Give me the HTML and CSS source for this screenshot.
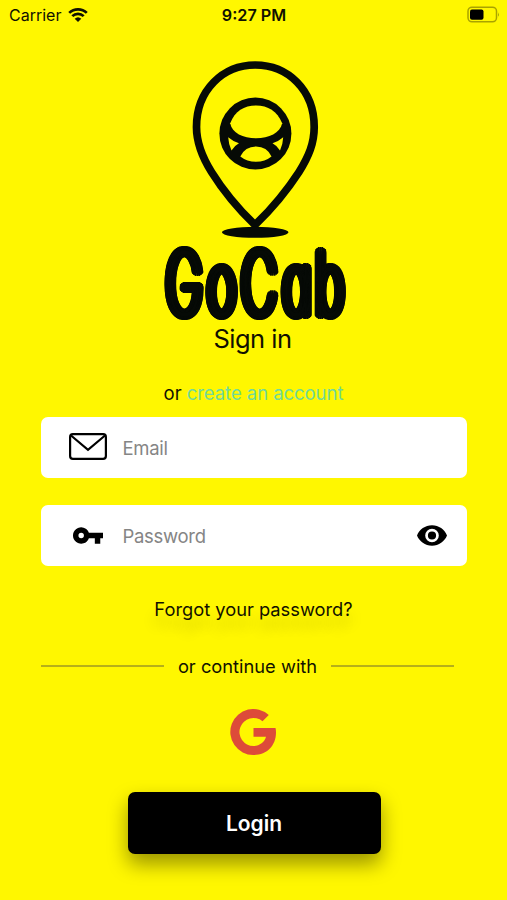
FILE: index.html
```html
<!DOCTYPE html>
<html lang="en">
<head>
    <meta charset="UTF-8">
    <meta name="viewport" content="width=device-width, initial-scale=1.0">
    <title>GoCab - Sign in</title>
    <link rel="stylesheet" href="styles.css">
</head>
<body>
    <header class="status-bar">
        <div class="carrier">
            <span>Carrier</span>
            <svg class="wifi" viewBox="0 0 20 14">
                <path d="M1.2 4.9a12.7 12.7 0 0 1 17.6 0M4.3 8.1a8.2 8.2 0 0 1 11.4 0" fill="none" stroke="#111100" stroke-width="2.7"/>
                <path d="M10 14 6.7 10.7a4.8 4.8 0 0 1 6.6 0z" fill="#111100"/>
            </svg>
        </div>
        <time class="clock">9:27 PM</time>
        <svg class="battery" viewBox="0 0 33 18">
            <rect x="1" y="1.2" width="28.5" height="14.6" rx="4" fill="none" stroke="#a9a300" stroke-width="1.5"/>
            <rect x="3" y="3.4" width="13.5" height="10.4" rx="2" fill="#000"/>
            <path d="M31 6.2q1.8 2.3 0 4.6z" fill="#a9a300"/>
        </svg>
    </header>

    <main class="sign-in">
        <!-- Logo: map pin, steering wheel and brand name -->
        <svg class="logo" viewBox="0 0 190 268" role="img" aria-label="GoCab">
            <path class="pin" d="M96 170C83.500 158 65 137 52.500 117C42.500 101 37.500 88 37.500 72C37.500 35 64 10 96.200 10C129 10 155.200 35 155.200 72C155.200 88 150 101 140 117C127 137 108.500 158 96 170Z"/>
            <circle class="ink" cx="96.400" cy="78.600" r="36"/>
            <path class="hole" d="M71.200 68.300C76 56 85 50.500 97 50.500S118 56 123.200 68.300C121 78 110 83.300 97 83.300S73 78 71.200 68.300Z"/>
            <path class="hole" d="M69.200 82.300Q74 86.500 80 88.300Q75 91 72.500 95.500Q69.500 89 69.200 82.300ZM124.200 82.300Q119.500 86.500 113.500 88.300Q118.500 91 121 95.500Q124 89 124.200 82.300Z"/>
            <path class="hole" d="M81.300 101.500Q86 91.500 97 91.500T112.500 101.500Q106 106.800 97 106.800T81.300 101.500Z"/>
            <ellipse class="ink" cx="96.200" cy="177.300" rx="33.300" ry="5.500"/>
            <text class="brand" transform="translate(0 259.500) scale(.565 1)" x="12.700 85.800 145.700 219 276.600" y="0">GoCab</text>
        </svg>

        <h1>Sign in</h1>
        <p class="register">or <a href="#">create an account</a></p>

        <form>
            <label class="field">
                <svg class="mail-icon" viewBox="0 0 38 27">
                    <rect x="1.100" y="1.100" width="35.800" height="24.800" rx="2.800"/>
                    <path d="M2 2.500 19 16.800 36 2.500"/>
                </svg>
                <input type="email" placeholder="Email">
            </label>
            <label class="field">
                <svg class="key-icon" viewBox="1 6 22 12">
                    <path d="M12.650 10A6 6 0 1 0 12.650 14H17v4h4v-4h2v-4zM7 14a2 2 0 1 1 0-4 2 2 0 0 1 0 4z"/>
                </svg>
                <input type="password" placeholder="Password">
                <svg class="eye-icon" viewBox="1 4.500 22 15">
                    <path d="M12 4.500C7 4.500 2.730 7.610 1 12c1.730 4.390 6 7.500 11 7.500s9.270-3.110 11-7.500c-1.730-4.390-6-7.500-11-7.500zM12 17a5 5 0 1 1 0-10 5 5 0 0 1 0 10zm0-8a3 3 0 1 0 0 6 3 3 0 0 0 0-6z"/>
                </svg>
            </label>
            <a class="forgot" href="#">Forgot your password?</a>
            <div class="divider"><span>or continue with</span></div>
            <button class="google" type="button" aria-label="Continue with Google">
                <svg viewBox="0 0 46 46">
                    <path d="M23.500 19.100V27.800H36C34.500 33.300 29.500 37 23.500 37A14 14 0 1 1 32.500 12.300L38.800 6A23 23 0 1 0 23.500 46C37 46 46 36.500 46 23.500Q46 21 45.500 19.100Z"/>
                </svg>
            </button>
            <button class="login" type="submit">Login</button>
        </form>
    </main>
</body>
</html>
```
FILE: styles.css
```css
* {
    box-sizing: border-box;
}

body {
    margin: 0;
    height: 900px;
    overflow: hidden;
    background-color: #fff700;
    color: #111100;
    font-family: Inter, Roboto, sans-serif;
}

.status-bar {
    display: grid;
    grid-template-columns: 1fr auto 1fr;
    align-items: center;
    height: 30px;
    padding: 0 8px 0 9px;
    font-size: 16px;
}

.carrier {
    display: flex;
    align-items: center;
    gap: 7px;
}

.wifi {
    width: 20px;
    height: 14px;
}

.clock {
    font-weight: 600;
    font-size: 16.2px;
}

.battery {
    width: 33px;
    height: 18px;
    justify-self: end;
    margin-right: -1px;
}

.sign-in {
    padding: 25px 41px 0;
}

.logo {
    display: block;
    width: 190px;
    height: 268px;
    margin: 0 auto;
    overflow: visible;
}

.pin {
    fill: none;
    stroke: #060a06;
    stroke-width: 7.7px;
}

.ink {
    fill: #060a06;
}

.hole {
    fill: #fff700;
}

/* Thin letters thickened by a ring of shadows, so the ends come out round */
.brand {
    font-family: Inter, sans-serif;
    font-size: 86.5px;
    font-weight: 100;
    font-feature-settings: "cv11";
    fill: #060a06;
    stroke: #060a06;
    stroke-width: 2px;
    stroke-linejoin: round;
    text-shadow:
        6.8px 0 #060a06, -6.8px 0 #060a06,
        6.3px 1.15px #060a06, -6.3px 1.15px #060a06,
        6.3px -1.15px #060a06, -6.3px -1.15px #060a06,
        4.8px 2.1px #060a06, -4.8px 2.1px #060a06,
        4.8px -2.1px #060a06, -4.8px -2.1px #060a06,
        2.6px 2.8px #060a06, -2.6px 2.8px #060a06,
        2.6px -2.8px #060a06, -2.6px -2.8px #060a06,
        0 3px #060a06, 0 -3px #060a06,
        3.4px 0 #060a06, -3.4px 0 #060a06;
}

h1 {
    margin: 1px 0 0;
    font-size: 25.5px;
    line-height: 30px;
    font-weight: 400;
    letter-spacing: -0.5px;
    text-indent: -2px;
    text-align: center;
}

.register {
    margin: 27px 0 12px;
    font-size: 18.5px;
    line-height: 24px;
    letter-spacing: -0.05px;
    text-align: center;
}

.register a {
    color: #70d99b;
    text-decoration: none;
}

form {
    display: flex;
    flex-direction: column;
    align-items: center;
}

.field {
    display: flex;
    align-items: center;
    width: 426px;
    height: 61px;
    margin-bottom: 27px;
    padding: 0 20px 0 28px;
    background-color: #fff;
    border-radius: 7px;
}

.field input {
    flex: 1;
    min-width: 0;
    padding: 0;
    border: none;
    outline: none;
    background: none;
    font-family: inherit;
    font-size: 18.5px;
    letter-spacing: -0.3px;
}

.field input::placeholder {
    color: #858585;
}

.mail-icon {
    width: 38px;
    height: 27px;
    margin: 0 16px 2px 0;
    fill: none;
    stroke: #000;
    stroke-width: 2.2;
}

.key-icon {
    width: 30px;
    height: 17px;
    margin: 0 20px 0 4px;
}

.eye-icon {
    width: 30px;
    height: 21px;
}

.forgot {
    margin-top: 4px;
    color: inherit;
    font-size: 18.3px;
    line-height: 24px;
    text-decoration: none;
    text-shadow: 0 12px 14px rgba(0, 0, 0, 0.2);
}

.divider {
    display: flex;
    align-items: center;
    gap: 14px;
    width: 413px;
    margin-top: 33px;
    align-self: flex-start;
    font-size: 18.3px;
    line-height: 24px;
}

.divider::before,
.divider::after {
    content: "";
    flex: 1;
    height: 2px;
    background-color: #b6b019;
}

button {
    padding: 0;
    border: none;
    cursor: pointer;
}

.google {
    width: 46px;
    height: 46px;
    margin: 31px 2px 0 0;
    background: none;
}

.google svg {
    display: block;
    fill: #dd4b39;
}

.login {
    width: 253px;
    height: 62px;
    margin: 37px 0 0 1px;
    border-radius: 7px;
    background-color: #000;
    color: #fff;
    font-family: inherit;
    font-size: 21px;
    font-weight: 600;
    box-shadow: 0 10px 20px rgba(0, 0, 0, 0.4);
}
```
